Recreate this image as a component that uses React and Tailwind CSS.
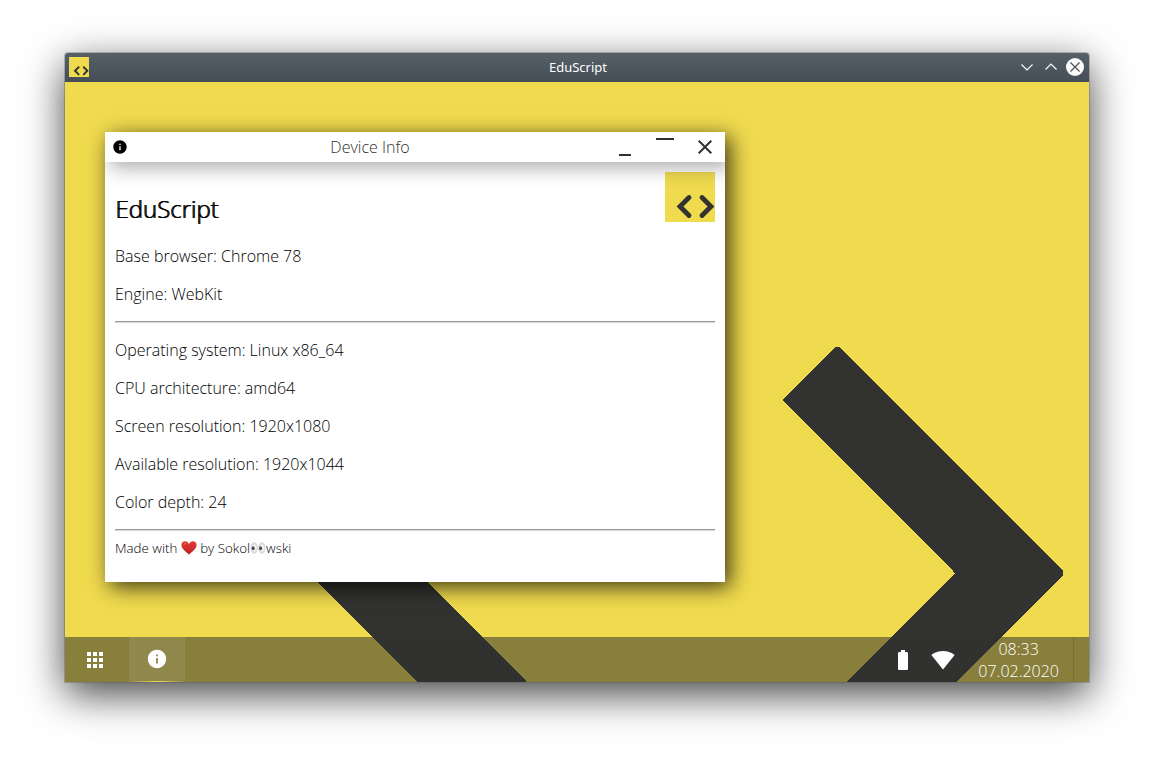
import React from "react";
import { MdApps, MdBatteryFull, MdClose, MdInfo, MdMaximize, MdMinimize, MdSignalWifi4Bar } from "react-icons/md";

const browserInfo = ["Base browser: Chrome 78", "Engine: WebKit"];
const deviceInfo = [
  "Operating system: Linux x86_64",
  "CPU architecture: amd64",
  "Screen resolution: 1920x1080",
  "Available resolution: 1920x1044",
  "Color depth: 24",
];

function Logo({ className }) {
  return (
    <svg viewBox="0 0 50 50" className={className} aria-hidden="true">
      <rect width="50" height="50" fill="#f0da4e" />
      <path
        d="M24 25.5 15 34.5l9 9M37 25.5l9 9-9 9"
        fill="none"
        stroke="#323230"
        strokeWidth="4.8"
        strokeLinecap="round"
      />
    </svg>
  );
}

function Wallpaper() {
  return (
    <svg
      viewBox="0 0 1024 600"
      preserveAspectRatio="xMidYMid slice"
      shapeRendering="crispEdges"
      className="absolute inset-0 h-full w-full"
      aria-hidden="true"
    >
      <rect width="1024" height="600" fill="#f0da4e" />
      <g fill="#323230">
        <path d="M718 318 770 265h4L998 489v4L891 600H781l109-109z" />
        <path d="M523 318 471 265h-4L245 491v2L352 600h110L354 491z" />
      </g>
    </svg>
  );
}

function Heart() {
  return (
    <svg viewBox="0 0 16 16" className="inline-block size-4 align-[-3px]" role="img" aria-label="heart">
      <defs>
        <linearGradient id="heart" x1="0" y1="0" x2="0" y2="1">
          <stop offset="0" stopColor="#e23b37" />
          <stop offset="1" stopColor="#c01f1f" />
        </linearGradient>
      </defs>
      <path
        d="M8 14.8C6 12.3.4 9.200.4 5 .4 2.700 2 1.300 4 1.300c1.900 0 3.300 1.200 4 2.700.7-1.500 2.100-2.700 4-2.700 2 0 3.600 1.400 3.600 3.700 0 4.200-5.600 7.300-7.600 9.800z"
        fill="url(#heart)"
      />
      <ellipse cx="3.800" cy="3.800" rx="1.600" ry="1" fill="#f0706a" opacity=".6" transform="rotate(-35 3.800 3.800)" />
    </svg>
  );
}

function Eyes() {
  return (
    <svg viewBox="0 0 16 16" className="inline-block size-4 align-[-3px]" role="img" aria-label="eyes">
      <defs>
        <radialGradient id="eye">
          <stop offset=".4" stopColor="#f8f8f8" />
          <stop offset="1" stopColor="#cccccc" />
        </radialGradient>
      </defs>
      <ellipse cx="4.200" cy="8" rx="3.600" ry="5.800" fill="url(#eye)" />
      <ellipse cx="11.800" cy="8" rx="3.600" ry="5.800" fill="url(#eye)" />
      <ellipse cx="3.200" cy="8.200" rx="1.500" ry="2" fill="#4a4a4a" />
      <ellipse cx="10.600" cy="8.200" rx="1.500" ry="2" fill="#4a4a4a" />
    </svg>
  );
}

function SystemTitleBar() {
  return (
    <header className="grid h-[29px] shrink-0 grid-cols-[1fr_auto_1fr] items-center rounded-t-[3px] bg-linear-to-b from-[#566069] to-[#454e57] pr-0.5 pb-px pl-1 text-white">
      <Logo className="size-5" />
      <span className="font-['Noto_Sans',sans-serif] text-[13px] leading-5 font-normal">EduScript</span>
      <div className="flex justify-end">
        <button aria-label="Minimize window" className="flex h-6 w-6 items-center justify-center">
          <svg viewBox="0 0 18 18" className="size-[18px]" fill="none" stroke="#fcfcfc" strokeWidth="1.200">
            <path d="m3.500 6.500 5.500 5.500 5.500-5.500" />
          </svg>
        </button>
        <button aria-label="Maximize window" className="flex h-6 w-6 items-center justify-center">
          <svg viewBox="0 0 18 18" className="size-[18px]" fill="none" stroke="#fcfcfc" strokeWidth="1.200">
            <path d="M3.500 11.500 9 6l5.500 5.500" />
          </svg>
        </button>
        <button aria-label="Close window" className="flex h-6 w-6 items-center justify-center">
          <svg viewBox="0 0 18 18" className="size-[18px]" fill="none">
            <circle cx="9" cy="9" r="9" fill="#fcfcfc" />
            <path d="m4.500 4.500 9 9m0-9-9 9" stroke="#475057" strokeWidth="1.200" />
          </svg>
        </button>
      </div>
    </header>
  );
}

function DeviceInfoWindow() {
  return (
    <section className="relative w-[620px] max-w-full bg-white shadow-[5px_5px_20px_rgba(0,0,0,0.75)]">
      <header className="relative z-10 flex h-[30px] items-center bg-white text-[#303030]">
        <span className="flex w-[30px] justify-center text-black">
          <MdInfo className="size-4" />
        </span>
        <h1 className="flex-1 text-center text-base leading-[22px]">Device Info</h1>
        <button aria-label="Minimize" className="flex h-full w-10 items-center justify-center">
          <MdMinimize className="size-6" />
        </button>
        <button aria-label="Maximize" className="flex h-full w-10 items-center justify-center">
          <MdMaximize className="size-6" />
        </button>
        <button aria-label="Close" className="flex h-full w-10 items-center justify-center">
          <MdClose className="size-6" />
        </button>
      </header>
      <div className="relative px-2.5 pt-2.5 pb-[25px] text-base leading-[22px] text-black">
        <Logo className="float-right size-[50px]" />
        <div className="pointer-events-none absolute inset-x-0 top-0 h-8 overflow-hidden">
          <div className="-mt-[30px] h-[30px] shadow-[5px_5px_20px_rgba(0,0,0,0.35)]" />
        </div>
        <h2 className="pt-5 pb-5 text-2xl leading-[33px] font-light text-black [text-shadow:1px_0_0_#000]">
          EduScript
        </h2>
        <div className="flex flex-col gap-4">
          {browserInfo.map((line) => (
            <p key={line}>{line}</p>
          ))}
        </div>
        <hr className="my-4 border-t border-b border-t-[#9a9a9a] border-b-[#d8d8d8]" />
        <div className="flex flex-col gap-4">
          {deviceInfo.map((line) => (
            <p key={line}>{line}</p>
          ))}
        </div>
        <hr className="mt-4 mb-2 border-t border-b border-t-[#9a9a9a] border-b-[#d8d8d8]" />
        <p className="text-[length:smaller] leading-[18px]">
          Made with <Heart /> by Sokol
          <Eyes />
          wski
        </p>
      </div>
    </section>
  );
}

function Taskbar() {
  return (
    <footer className="relative flex h-[45px] shrink-0 items-stretch bg-[rgba(48,50,47,0.54)] text-white">
      <button aria-label="Applications" className="mr-1 flex w-15 items-center justify-center">
        <MdApps className="size-6" />
      </button>
      <button aria-label="Device Info" className="flex w-14 flex-col items-center bg-white/8">
        <span className="flex flex-1 items-center">
          <MdInfo className="size-[22px]" />
        </span>
        <span className="h-px w-full bg-linear-to-r from-transparent via-[#f0da4e] to-transparent" />
      </button>
      <div className="ml-auto flex">
        <button aria-label="Battery" className="flex w-10 items-center justify-center">
          <MdBatteryFull className="size-6" />
        </button>
        <button aria-label="Wi-Fi" className="flex w-10 items-center justify-center">
          <MdSignalWifi4Bar className="size-6" />
        </button>
        <time dateTime="2020-02-07T08:33" className="pt-px pr-3.5 pl-[15px] text-center text-base leading-[22px] text-white">
          <span className="block">08:33</span>
          <span className="block">07.02.2020</span>
        </time>
        <button aria-label="Show desktop" className="w-4 border-l border-black/10" />
      </div>
    </footer>
  );
}

export default function App() {
  return (
    <div className="flex min-h-screen flex-col bg-white px-[65px] pt-[53px] pb-[77px] font-['Open_Sans',sans-serif] font-light">
      <div className="flex flex-1 flex-col rounded-t-[3px] shadow-[0_0_0_1px_rgba(90,90,95,0.35),0_12px_40px_rgba(0,0,0,0.75)]">
        <SystemTitleBar />
        <main className="relative flex flex-1 flex-col overflow-hidden">
          <Wallpaper />
          <div className="relative flex-1 px-10 pt-[50px] pb-10">
            <DeviceInfoWindow />
          </div>
          <Taskbar />
        </main>
      </div>
    </div>
  );
}
